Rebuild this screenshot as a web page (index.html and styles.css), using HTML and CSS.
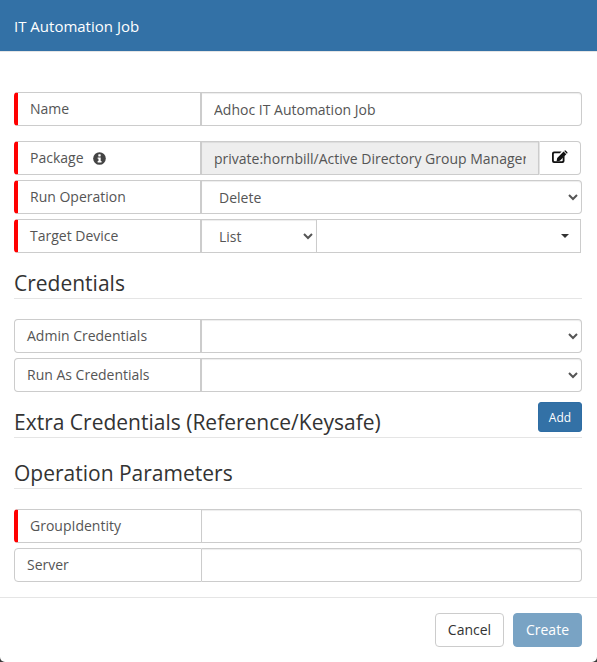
FILE: index.html
```html
<!DOCTYPE html>
<html lang="en">
<head>
    <meta charset="UTF-8">
    <meta name="viewport" content="width=device-width, initial-scale=1.0">
    <title>IT Automation Job</title>
    <link rel="stylesheet" href="styles.css">
</head>
<body>
    <div class="modal">
        <div class="modal-header">IT Automation Job</div>

        <div class="modal-body">
            <div class="field field-name">
                <label class="field-label required">Name</label>
                <input class="field-control" type="text" value="Adhoc IT Automation Job">
            </div>

            <div class="field">
                <label class="field-label required">Package
                    <svg class="info-icon" viewBox="0 0 14 14" aria-hidden="true">
                        <circle cx="7" cy="7" r="6.8" fill="#444"/>
                        <rect x="5.7" y="2.5" width="2.6" height="2.3" rx="0.4" fill="#fff"/>
                        <path d="M5 5.8h3.3v3.8h0.9v1.6H5V9.6h0.9V7.3H5z" fill="#fff"/>
                    </svg>
                </label>
                <input class="field-control package-input" type="text" value="private:hornbill/Active Directory Group Manager" disabled>
                <button class="edit-button" type="button" aria-label="Edit">
                    <svg viewBox="0 0 16 13" width="16" height="13" aria-hidden="true">
                        <path d="M2 1.5h7.6L7.8 3.3H2.6a.8.8 0 0 0-.8.8v6.3c0 .4.4.8.8.8h7.3c.4 0 .8-.4.8-.8V7.6L12.5 5.8v5.2a2 2 0 0 1-2 2H2a2 2 0 0 1-2-2V3.5a2 2 0 0 1 2-2z" fill="#111"/>
                        <path d="M11.6 1.6l2.7 2.7-6.4 6.4-3.4.7.7-3.4zM12.5.7a.9.9 0 0 1 1.3 0l1.4 1.4a.9.9 0 0 1 0 1.3l-.3.3-2.7-2.7z" fill="#111"/>
                    </svg>
                </button>
            </div>

            <div class="field">
                <label class="field-label required">Run Operation</label>
                <select class="field-control">
                    <option>Delete</option>
                </select>
            </div>

            <div class="field">
                <label class="field-label required">Target Device</label>
                <select class="field-control target-type">
                    <option>List</option>
                </select>
                <div class="combo"><span class="combo-caret"></span></div>
            </div>

            <div class="section-title section-credentials">Credentials</div>

            <div class="field">
                <label class="field-label">Admin Credentials</label>
                <select class="field-control"><option></option></select>
            </div>
            <div class="field">
                <label class="field-label">Run As Credentials</label>
                <select class="field-control"><option></option></select>
            </div>

            <div class="section-title section-extra">
                <span>Extra Credentials (Reference/Keysafe)</span>
                <button class="add-button" type="button">Add</button>
            </div>

            <div class="section-title section-params">Operation Parameters</div>

            <div class="field field-thin">
                <label class="field-label required">GroupIdentity</label>
                <input class="field-control" type="text">
            </div>
            <div class="field field-thin">
                <label class="field-label">Server</label>
                <input class="field-control" type="text">
            </div>
        </div>

        <div class="modal-footer">
            <button class="cancel-button" type="button">Cancel</button>
            <button class="create-button" type="button">Create</button>
        </div>
    </div>
</body>
</html>
```

FILE: styles.css
```css
html, body {
    height: 100%;
}

body {
    margin: 0;
    background-color: #3a3a3a;
    font-family: "Open Sans", sans-serif;
    font-size: 14px;
    color: #555;
}

.modal {
    height: 662px;
    box-sizing: border-box;
    background-color: #fff;
    border-radius: 0 0 5px 5px;
    overflow: hidden;
}

.modal-header {
    height: 52px;
    box-sizing: border-box;
    padding: 16px 14px 0;
    background-color: #3371a6;
    border-bottom: 1px solid #e5e5e5;
    color: #fff;
    font-size: 15px;
    line-height: 20px;
}

.modal-body {
    height: 546px;
    box-sizing: border-box;
    padding: 40px 15px 0 14px;
    border-bottom: 1px solid #e5e5e5;
}

.field {
    display: flex;
    height: 34px;
    margin-bottom: 5px;
}

.field-name {
    margin-bottom: 15px;
}

.field-label {
    display: flex;
    align-items: center;
    flex: 0 0 188px;
    box-sizing: border-box;
    padding: 0 12px;
    border: 1px solid #ccc;
    border-width: 1px 2px 1px 1px;
    border-radius: 4px 0 0 4px;
    background-color: #fff;
    line-height: 30px;
}

.field-label.required {
    padding-left: 12px;
    border-left: 4px solid #f00;
}

.field-thin .field-label {
    border-right-width: 1px;
}

.info-icon {
    width: 13px;
    height: 13px;
    margin-left: 9px;
}

.field-control {
    flex: 1 1 0;
    min-width: 0;
    box-sizing: border-box;
    height: 34px;
    padding: 6px 12px;
    border: 1px solid #ccc;
    border-left: 0;
    border-radius: 0 4px 4px 0;
    background-color: #fff;
    box-shadow: inset 0 1px 1px rgba(0, 0, 0, 0.075);
    font-family: inherit;
    font-size: 14px;
    color: #555;
}

select.field-control {
    padding-left: 13px;
}

.package-input {
    border-radius: 0;
    background-color: #eee;
    opacity: 1;
}

.edit-button {
    flex: 0 0 42px;
    height: 34px;
    padding: 0;
    border: 1px solid #ccc;
    border-left: 1px solid #e5e5e5;
    border-radius: 0 4px 4px 0;
    margin-right: 1px;
    background-color: #fff;
}

.target-type {
    flex: 0 0 114px;
    border-right: 0;
    border-radius: 0;
}

.combo {
    display: flex;
    align-items: center;
    justify-content: flex-end;
    flex: 1 1 0;
    box-sizing: border-box;
    height: 34px;
    margin-right: 1px;
    padding-right: 11px;
    border: 1px solid #ccc;
}

.combo-caret {
    width: 0;
    height: 0;
    border-top: 4px solid #333;
    border-left: 4px solid transparent;
    border-right: 4px solid transparent;
}

.section-title {
    display: flex;
    justify-content: space-between;
    align-items: flex-end;
    border-bottom: 1px solid #e5e5e5;
    font-size: 21px;
    line-height: 26px;
    color: #333;
}

.section-credentials {
    margin-top: 17px;
    padding-bottom: 2px;
    margin-bottom: 20px;
}

.section-extra {
    position: relative;
    height: 41px;
    box-sizing: border-box;
    margin-top: 5px;
    padding-bottom: 2px;
    margin-bottom: 22px;
}

.add-button {
    position: absolute;
    top: 5px;
    right: 0;
    width: 44px;
    height: 30px;
    padding: 0;
    border: 1px solid #2e6da4;
    border-radius: 3px;
    background-color: #3371a6;
    color: #fff;
    font-family: inherit;
    font-size: 12px;
}

.section-params {
    padding-bottom: 2px;
    margin-bottom: 20px;
}

.modal-footer {
    display: flex;
    justify-content: flex-end;
    gap: 9px;
    padding: 15px 15px 0;
}

.cancel-button,
.create-button {
    height: 34px;
    padding: 0 0 2px;
    border-radius: 4px;
    font-family: inherit;
    font-size: 14px;
}

.cancel-button {
    width: 69px;
    border: 1px solid #ccc;
    background-color: #fff;
    color: #333;
}

.create-button {
    width: 69px;
    border: 1px solid #79a3c4;
    background-color: #79a3c4;
    color: #fff;
}
```
